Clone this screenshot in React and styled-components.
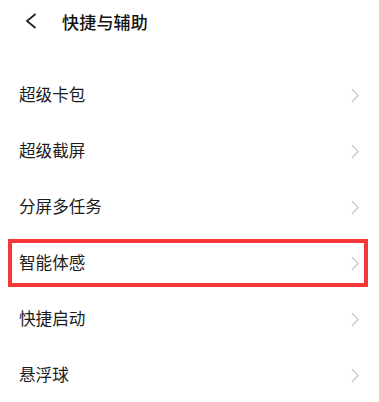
import React from 'react';
import styled, { createGlobalStyle } from 'styled-components';

const GlobalStyle = createGlobalStyle`
  html, body {
    margin: 0;
    padding: 0;
    background: #fff;
  }
  body {
    font-family: "Noto Sans CJK SC", "Noto Sans", sans-serif;
    color: #1c1c1c;
  }
`;

const items = ['超级卡包', '超级截屏', '分屏多任务', '智能体感', '快捷启动', '悬浮球'];

const Page = styled.div`
  width: 379px;
  height: 402px;
  overflow: hidden;
  background: #fff;
`;

const Header = styled.div`
  display: flex;
  align-items: center;
  height: 42px;
  padding-left: 25px;
`;

const Title = styled.span`
  margin-left: 25px;
  font-size: 17px;
  font-weight: 500;
  color: #111;
  letter-spacing: 0.2px;
`;

const List = styled.div`
  display: flex;
  flex-direction: column;
  padding-top: 25px;
`;

const Row = styled.div`
  position: relative;
  display: flex;
  align-items: center;
  justify-content: space-between;
  height: 56px;
  padding: 0 20px 0 19px;
  font-size: 16.6px;
  color: #1c1c1c;
`;

const Label = styled.span`
  position: relative;
  top: -1px;
`;

const Highlight = styled.div`
  position: absolute;
  top: 4px;
  bottom: 4px;
  left: 8px;
  right: 11px;
  border: 4px solid #f43838;
  pointer-events: none;
`;

const BackIcon = () => (
  <svg width="12" height="16" viewBox="0 0 12 16">
    <polyline points="10.5,1 2,8 10.5,15" fill="none" stroke="#222" strokeWidth="1.8" strokeLinejoin="miter" />
  </svg>
);

const Chevron = () => (
  <svg width="8" height="15" viewBox="0 0 8 15">
    <polyline points="1,1 7,7.5 1,14" fill="none" stroke="#c9c9c9" strokeWidth="1.3" />
  </svg>
);

export default function App() {
  return (
    <Page>
      <GlobalStyle />
      <Header>
        <BackIcon />
        <Title>快捷与辅助</Title>
      </Header>
      <List>
        {items.map((label) => (
          <Row key={label}>
            <Label>{label}</Label>
            <Chevron />
            {label === '智能体感' && <Highlight />}
          </Row>
        ))}
      </List>
    </Page>
  );
}
